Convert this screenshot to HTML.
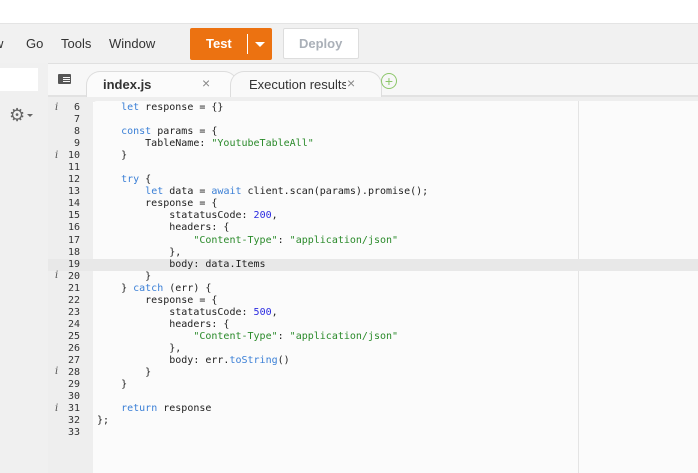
<!DOCTYPE html>
<html><head><style>
body{margin:0;width:698px;height:473px;overflow:hidden;background:#fff;font-family:"Liberation Sans",sans-serif;position:relative}
.a{position:absolute}
.code{font-family:"DejaVu Sans Mono",monospace;font-size:10px;line-height:12.04px;white-space:pre;color:#222}
.k{color:#3a7fd6}.s{color:#2a8a2a}.n{color:#2a2ae0}
.i{position:absolute;left:55px;font-family:'DejaVu Serif',serif;font-style:italic;font-size:10px;color:#555}
</style></head><body>
<div class="a" style="left:0;top:0;width:698px;height:23px;background:#fff"></div>
<div class="a" style="left:0;top:23px;width:698px;height:40px;background:#f1f1f1;border-top:1px solid #e4e4e4;box-sizing:border-box"></div>
<div class="a" style="left:-6px;top:36px;font-size:13px;color:#333">w</div>
<div class="a" style="left:26px;top:36px;font-size:13px;color:#333">Go</div>
<div class="a" style="left:61px;top:36px;font-size:13px;color:#333">Tools</div>
<div class="a" style="left:109px;top:36px;font-size:13px;color:#333">Window</div>
<div class="a" style="left:190px;top:28px;width:82px;height:32px;background:#ec7211;border-radius:2px"></div>
<div class="a" style="left:206px;top:36px;font-size:13px;color:#fff;font-weight:bold">Test</div>
<div class="a" style="left:247px;top:34px;width:1px;height:20px;background:#fff"></div>
<div class="a" style="left:255px;top:42px;width:0;height:0;border-left:5px solid transparent;border-right:5px solid transparent;border-top:5px solid #fff"></div>
<div class="a" style="left:283px;top:28px;width:76px;height:31px;background:#fff;border:1px solid #ddd;border-radius:2px;box-sizing:border-box"></div>
<div class="a" style="left:299px;top:36px;font-size:13px;color:#aab0b8;font-weight:bold">Deploy</div>
<div class="a" style="left:0;top:63px;width:48px;height:410px;background:#f0f0f0"></div>
<div class="a" style="left:0;top:68px;width:38px;height:23px;background:#fff"></div>
<div class="a" style="left:9px;top:105px;font-size:18px;color:#666">⚙</div>
<div class="a" style="left:27px;top:114px;width:0;height:0;border-left:3px solid transparent;border-right:3px solid transparent;border-top:3px solid #666"></div>
<div class="a" style="left:48px;top:63px;width:650px;height:34px;background:#f7f7f7;border-top:1px solid #e0e0e0;border-bottom:2px solid #e2e2e2;box-sizing:border-box"></div>
<div class="a" style="left:58px;top:74px;width:13px;height:10px;background:#555;border-radius:1px"></div>
<div class="a" style="left:63px;top:77px;width:7px;height:1px;background:#f7f7f7;box-shadow:0 2px 0 #f7f7f7,0 4px 0 #f7f7f7"></div>
<div class="a" style="left:86px;top:71px;width:150px;height:25px;background:#fbfbfb;border:1px solid #ddd;border-bottom:none;border-radius:14px 14px 0 0"></div>
<div class="a" style="left:103px;top:77px;font-size:13px;color:#333;font-weight:bold">index.js</div>
<div class="a" style="left:202px;top:75px;font-size:14px;color:#888">×</div>
<div class="a" style="left:230px;top:71px;width:150px;height:25px;background:#f9f9f9;border:1px solid #ddd;border-bottom:none;border-radius:14px 14px 0 0"></div>
<div class="a" style="left:249px;top:77px;font-size:13px;color:#333;width:97px;overflow:hidden;white-space:nowrap">Execution results</div>
<div class="a" style="left:347px;top:75px;font-size:14px;color:#888">×</div>
<div class="a" style="left:381px;top:73px;width:14px;height:14px;border:1px solid #8cc66a;border-radius:50%;color:#8cc66a;font-size:14px;line-height:14px;text-align:center">+</div>
<div class="a" style="left:48px;top:97px;width:650px;height:5px;background:#eee"></div>
<div class="a" style="left:48px;top:101px;width:45px;height:372px;background:#eee"></div>
<div class="a" style="left:93px;top:101px;width:605px;height:372px;background:#fbfbfb;border-top-left-radius:4px"></div>
<div class="a" style="left:578px;top:101px;width:1px;height:372px;background:#e4e4e4"></div>
<div class="a" style="left:48px;top:259px;width:650px;height:12px;background:#e8e8e8"></div>
<div class="i" style="top:102px">i</div>
<div class="i" style="top:150px">i</div>
<div class="i" style="top:270px">i</div>
<div class="i" style="top:366px">i</div>
<div class="i" style="top:403px">i</div>
<div class="a code" style="left:62px;top:102px;width:18px;text-align:right;color:#333">6
7
8
9
10
11
12
13
14
15
16
17
18
19
20
21
22
23
24
25
26
27
28
29
30
31
32
33</div>
<div class="a code" style="left:97px;top:102px">    <span class="k">let</span> response = {}

    <span class="k">const</span> params = {
        TableName: <span class="s">"YoutubeTableAll"</span>
    }

    <span class="k">try</span> {
        <span class="k">let</span> data = <span class="k">await</span> client.scan(params).promise();
        response = {
            statatusCode: <span class="n">200</span>,
            headers: {
                <span class="s">"Content-Type"</span>: <span class="s">"application/json"</span>
            },
            body: data.Items
        }
    } <span class="k">catch</span> (err) {
        response = {
            statatusCode: <span class="n">500</span>,
            headers: {
                <span class="s">"Content-Type"</span>: <span class="s">"application/json"</span>
            },
            body: err.<span class="k">toString</span>()
        }
    }

    <span class="k">return</span> response
};</div>
</body></html>
